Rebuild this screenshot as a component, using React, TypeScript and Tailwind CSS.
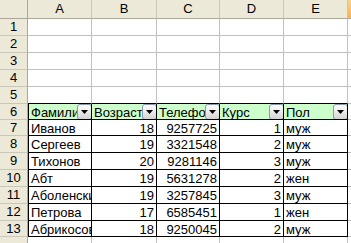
import { ReactNode } from "react";

const cols = ["A", "B", "C", "D", "E"];
const colW = ["w-[64px]", "w-[65px]", "w-[63px]", "w-[64px]", "w-[64px]"];

// row heights include the bottom grid line
const rowH: Record<number, string> = {
  1: "h-[17px]",
  2: "h-[17px]",
  3: "h-[17px]",
  4: "h-[17px]",
  5: "h-[17px]",
  6: "h-[16px]",
  7: "h-[16px]",
  8: "h-[17px]",
  9: "h-[17px]",
  10: "h-[17px]",
  11: "h-[17px]",
  12: "h-[17px]",
  13: "h-[16px]",
  14: "h-[17px]",
};

const header = ["Фамилия", "Возраст", "Телефон", "Курс", "Пол"];

const data: (string | number)[][] = [
  ["Иванов", 18, 9257725, 1, "муж"],
  ["Сергеев", 19, 3321548, 2, "муж"],
  ["Тихонов", 20, 9281146, 3, "муж"],
  ["Абт", 19, 5631278, 2, "жен"],
  ["Аболенский", 19, 3257845, 3, "муж"],
  ["Петрова", 17, 6585451, 1, "жен"],
  ["Абрикосов", 18, 9250045, 2, "муж"],
];

const FilterButton = () => (
  <div className="absolute right-[-1px] top-0 w-[15px] h-[16px] rounded-[3px] border border-[#8a99b0] bg-gradient-to-b from-white to-[#d4d4d4] flex items-center justify-center">
    <svg width="7" height="4" viewBox="0 0 7 4">
      <path d="M0 0h7L3.5 4z" fill="#000" />
    </svg>
  </div>
);

const RowHead = ({ n, label = true }: { n: number; label?: boolean }) => (
  <div
    className={`${rowH[n]} w-[28px] shrink-0 bg-[#ece9d8] border-r border-b border-r-[#aca899] border-b-[#cbc7b8] flex items-center justify-center`}
  >
    {label ? n : null}
  </div>
);

const Cell = ({
  i,
  row,
  children,
  right,
  green,
  filter,
}: {
  i: number;
  row: number;
  children?: ReactNode;
  right?: boolean;
  green?: boolean;
  filter?: boolean;
}) => {
  const inTable = row >= 6 && row <= 13;
  const blackBottom = row >= 5 && row <= 13;
  return (
    <div
      className={`relative ${colW[i]} shrink-0 h-full border-r border-b overflow-hidden whitespace-nowrap flex items-center ${
        inTable ? "border-r-black" : "border-r-[#c0c0c0]"
      } ${blackBottom ? "border-b-black" : "border-b-[#c0c0c0]"} ${
        inTable && i === 0 ? "border-l border-l-black" : ""
      } ${green ? "bg-[#ccffcc]" : "bg-white"} ${
        right ? "justify-end pr-[2px]" : "pl-[2px]"
      }`}
    >
      <span className="leading-[15px] pt-[1px]">{children}</span>
      {filter && <FilterButton />}
    </div>
  );
};

const Row = ({ n, children }: { n: number; children?: ReactNode }) => (
  <div className={`flex ${rowH[n]}`}>
    <RowHead n={n} label={n < 14} />
    {children}
    <div className="flex-1 h-full border-b border-b-[#c0c0c0] bg-white" />
  </div>
);

export default function App() {
  return (
    <div className="w-[351px] h-[243px] overflow-hidden bg-white text-black text-[13px] font-['Liberation_Sans',Arial,sans-serif]">
      <div className="flex h-[19px]">
        <div className="w-[28px] shrink-0 bg-[#ece9d8] border-r border-b border-r-[#aca899] border-b-[#aca899]" />
        {cols.map((c, i) => (
          <div
            key={c}
            className={`${colW[i]} shrink-0 bg-[#ece9d8] border-r border-b border-r-[#cbc7b8] border-b-[#aca899] flex items-center justify-center`}
          >
            {c}
          </div>
        ))}
        <div className="flex-1 bg-gradient-to-b from-[#fbd48c] to-[#f6b24c] border-b border-b-[#aca899]" />
      </div>

      {[1, 2, 3, 4, 5].map((n) => (
        <Row key={n} n={n}>
          {cols.map((c, i) => (
            <Cell key={c} i={i} row={n} />
          ))}
        </Row>
      ))}

      <Row n={6}>
        {header.map((h, i) => (
          <Cell key={h} i={i} row={6} green filter>
            {h}
          </Cell>
        ))}
      </Row>

      {data.map((r, k) => (
        <Row key={k} n={k + 7}>
          {r.map((v, i) => (
            <Cell key={i} i={i} row={k + 7} right={typeof v === "number"}>
              {v}
            </Cell>
          ))}
        </Row>
      ))}

      <Row n={14}>
        {cols.map((c, i) => (
          <Cell key={c} i={i} row={14} />
        ))}
      </Row>
    </div>
  );
}
